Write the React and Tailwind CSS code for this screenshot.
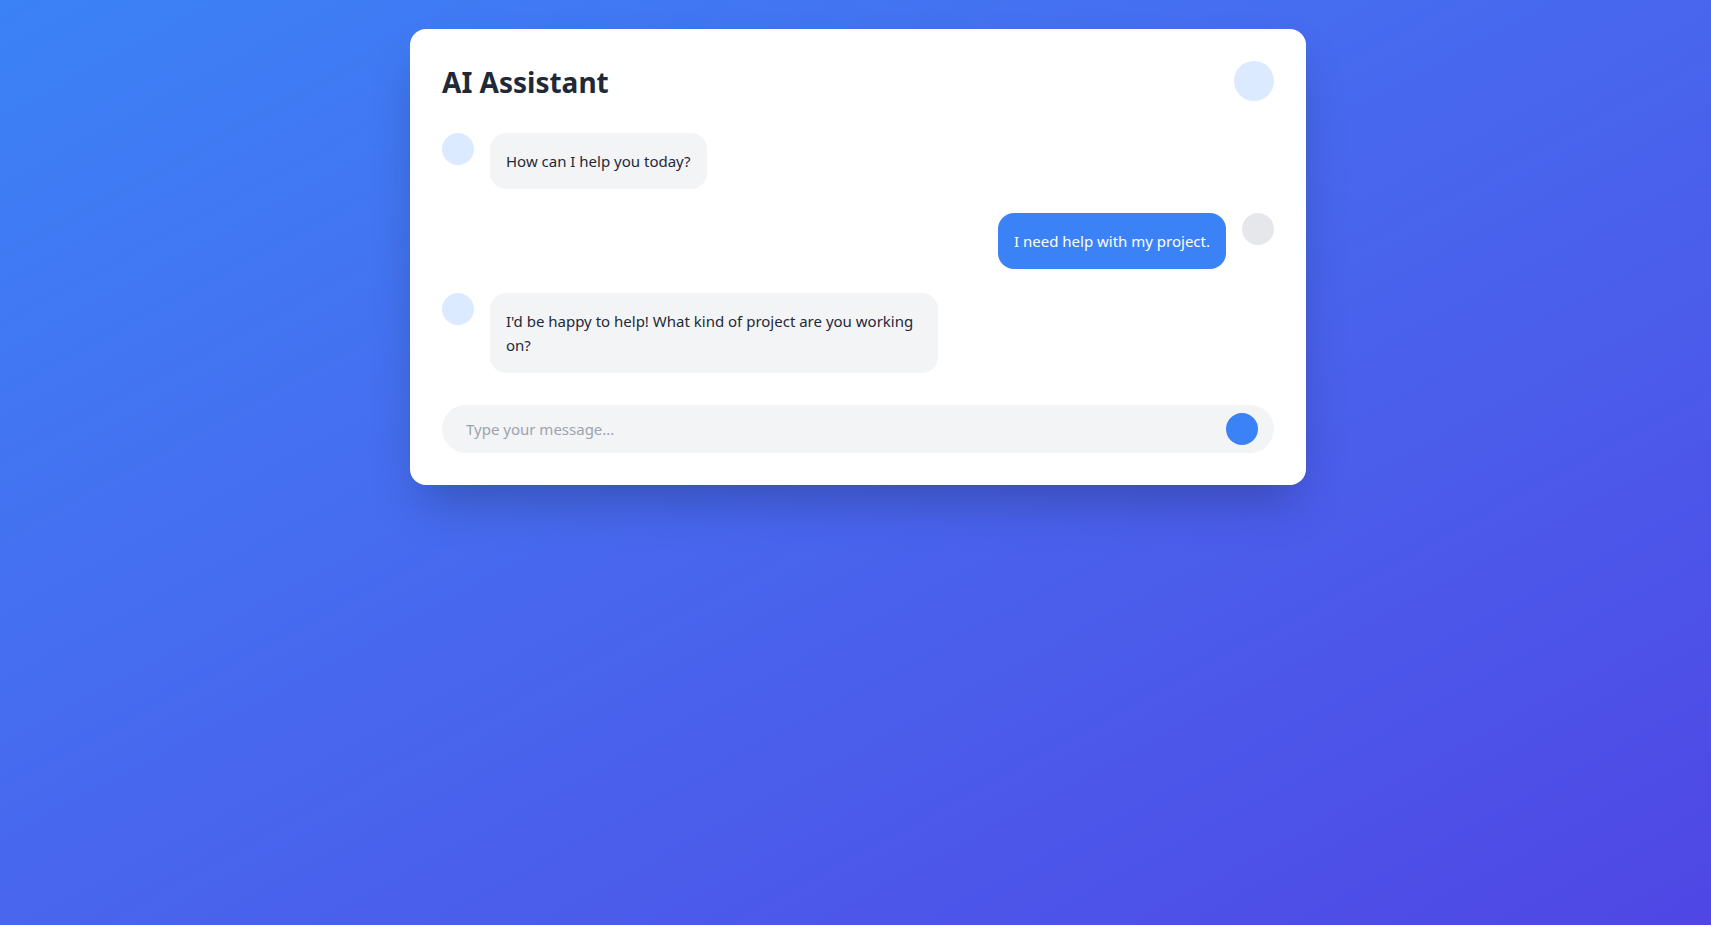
function BotMessage({ children }) {
  return (
    <div className="flex items-start gap-4">
      <div className="h-8 w-8 shrink-0 rounded-full bg-[#dbeafe]" />
      <div className="max-w-md rounded-2xl bg-[#f3f4f6] p-4 text-[15px] leading-6 text-[#1f2937]">
        {children}
      </div>
    </div>
  );
}

function UserMessage({ children }) {
  return (
    <div className="flex items-start justify-end gap-4">
      <div className="max-w-md rounded-2xl bg-[#3b82f6] p-4 text-[15px] leading-6 text-white">
        {children}
      </div>
      <div className="h-8 w-8 shrink-0 rounded-full bg-[#e5e7eb]" />
    </div>
  );
}

export default function App() {
  return (
    <div className="flex min-h-screen items-start justify-center bg-linear-to-br from-[#3b82f6] to-[#4f46e5] pt-[29px] pl-[5px] font-['Noto_Sans',sans-serif]">
      <div className="w-[896px] rounded-2xl bg-white p-8 shadow-2xl">
        <div className="mb-8 flex items-center justify-between">
          <h1 className="pt-0.5 text-[28px] leading-9 font-bold text-[#1f2937]">AI Assistant</h1>
          <div className="h-10 w-10 rounded-full bg-[#dbeafe]" />
        </div>
        <div className="mb-8 flex flex-col gap-6">
          <BotMessage>How can I help you today?</BotMessage>
          <UserMessage>I need help with my project.</UserMessage>
          <BotMessage>I&apos;d be happy to help! What kind of project are you working on?</BotMessage>
        </div>
        <div className="flex h-12 items-center rounded-full bg-[#f3f4f6] pr-4 pl-6">
          <input
            type="text"
            placeholder="Type your message..."
            className="flex-1 bg-transparent text-[15px] text-[#1f2937] outline-none placeholder:text-[#9ca3af]"
          />
          <button className="h-8 w-8 shrink-0 rounded-full bg-[#3b82f6]" aria-label="Send" />
        </div>
      </div>
    </div>
  );
}
